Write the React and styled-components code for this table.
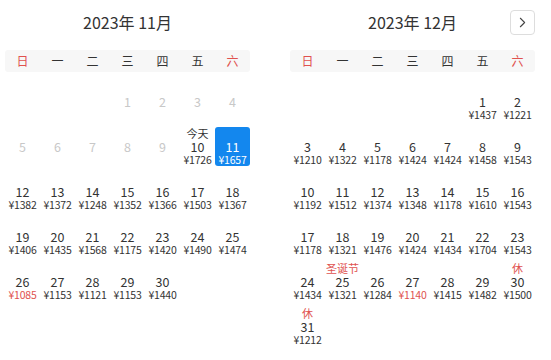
import React from 'react';
import styled, { createGlobalStyle } from 'styled-components';
import { ChevronRight } from 'lucide-react';

const GlobalStyle = createGlobalStyle`
  body {
    margin: 0;
    background: #fff;
    font-family: "Noto Sans CJK SC", "Noto Sans", sans-serif;
    color: #333;
  }
`;

const Wrapper = styled.div`
  display: flex;
  gap: 40px;
  padding: 0 16px 0 5px;
`;

const Month = styled.div`
  width: 245px;
`;

const Header = styled.div`
  display: grid;
  grid-template-columns: 1fr auto 1fr;
  align-items: center;
  height: 44px;
  margin-bottom: 6px;
`;

const Title = styled.div`
  grid-column: 2;
  font-size: 16px;
  color: #333;
  white-space: pre;
`;

const NavButton = styled.button`
  grid-column: 3;
  justify-self: end;
  width: 25px;
  height: 25px;
  padding: 0;
  display: flex;
  align-items: center;
  justify-content: center;
  background: #fff;
  border: 1px solid #ddd;
  border-radius: 4px;
  color: #444;
`;

const WeekBar = styled.div`
  display: grid;
  grid-template-columns: repeat(7, 35px);
  height: 22px;
  background: #f7f7f7;
  border-radius: 3px;
`;

const WeekDay = styled.div`
  text-align: center;
  line-height: 22px;
  font-size: 12px;
  color: ${p => (p.$weekend ? '#e0524f' : '#333')};
`;

const Days = styled.div`
  display: grid;
  grid-template-columns: repeat(7, 35px);
  grid-auto-rows: 39px;
  row-gap: 6px;
  margin-top: 10px;
`;

const Cell = styled.div`
  display: flex;
  flex-direction: column;
  align-items: center;
  border-radius: 3px;
  background: ${p => (p.$selected ? '#1387ee' : 'transparent')};
  color: ${p => (p.$selected ? '#fff' : '#333')};
`;

const Label = styled.div`
  height: 13px;
  line-height: 13px;
  font-size: 11px;
  color: ${p => (p.$red ? '#e0524f' : 'inherit')};
  white-space: nowrap;
`;

const DayNum = styled.div`
  height: 14px;
  line-height: 14px;
  font-size: 12.5px;
  color: ${p => (p.$disabled ? '#c8c8c8' : 'inherit')};
`;

const Price = styled.div`
  height: 11px;
  line-height: 11px;
  font-size: 10.5px;
  letter-spacing: -0.2px;
  white-space: nowrap;
  color: ${p => (p.$low ? '#e0524f' : 'inherit')};
`;

const WEEK = ['日', '一', '二', '三', '四', '五', '六'];

const nov = {
  title: '2023年 11月',
  offset: 3,
  days: [
    { d: 1, off: true }, { d: 2, off: true }, { d: 3, off: true }, { d: 4, off: true },
    { d: 5, off: true }, { d: 6, off: true }, { d: 7, off: true }, { d: 8, off: true },
    { d: 9, off: true },
    { d: 10, p: 1726, label: '今天' },
    { d: 11, p: 1657, sel: true },
    { d: 12, p: 1382 }, { d: 13, p: 1372 }, { d: 14, p: 1248 }, { d: 15, p: 1352 },
    { d: 16, p: 1366 }, { d: 17, p: 1503 }, { d: 18, p: 1367 },
    { d: 19, p: 1406 }, { d: 20, p: 1435 }, { d: 21, p: 1568 }, { d: 22, p: 1175 },
    { d: 23, p: 1420 }, { d: 24, p: 1490 }, { d: 25, p: 1474 },
    { d: 26, p: 1085, low: true }, { d: 27, p: 1153 }, { d: 28, p: 1121 },
    { d: 29, p: 1153 }, { d: 30, p: 1440 },
  ],
};

const dec = {
  title: '2023年 12月',
  offset: 5,
  next: true,
  days: [
    { d: 1, p: 1437 }, { d: 2, p: 1221 },
    { d: 3, p: 1210 }, { d: 4, p: 1322 }, { d: 5, p: 1178 }, { d: 6, p: 1424 },
    { d: 7, p: 1424 }, { d: 8, p: 1458 }, { d: 9, p: 1543 },
    { d: 10, p: 1192 }, { d: 11, p: 1512 }, { d: 12, p: 1374 }, { d: 13, p: 1348 },
    { d: 14, p: 1178 }, { d: 15, p: 1610 }, { d: 16, p: 1543 },
    { d: 17, p: 1178 }, { d: 18, p: 1321 }, { d: 19, p: 1476 }, { d: 20, p: 1424 },
    { d: 21, p: 1434 }, { d: 22, p: 1704 }, { d: 23, p: 1543 },
    { d: 24, p: 1434 }, { d: 25, p: 1321, label: '圣诞节', red: true },
    { d: 26, p: 1284 }, { d: 27, p: 1140, low: true }, { d: 28, p: 1415 },
    { d: 29, p: 1482 }, { d: 30, p: 1500, label: '休', red: true },
    { d: 31, p: 1212, label: '休', red: true },
  ],
};

const Calendar = ({ data }) => (
  <Month>
    <Header>
      <Title>{data.title}</Title>
      {data.next && (
        <NavButton>
          <ChevronRight size={17} strokeWidth={1.5} />
        </NavButton>
      )}
    </Header>
    <WeekBar>
      {WEEK.map((w, i) => (
        <WeekDay key={w} $weekend={i === 0 || i === 6}>{w}</WeekDay>
      ))}
    </WeekBar>
    <Days>
      {Array.from({ length: data.offset }).map((_, i) => <div key={'e' + i} />)}
      {data.days.map(day => (
        <Cell key={day.d} $selected={day.sel}>
          <Label $red={day.red}>{day.label || ''}</Label>
          <DayNum $disabled={day.off}>{day.d}</DayNum>
          {day.p && <Price $low={day.low}>¥{day.p}</Price>}
        </Cell>
      ))}
    </Days>
  </Month>
);

export default function App() {
  return (
    <>
      <GlobalStyle />
      <Wrapper>
        <Calendar data={nov} />
        <Calendar data={dec} />
      </Wrapper>
    </>
  );
}
